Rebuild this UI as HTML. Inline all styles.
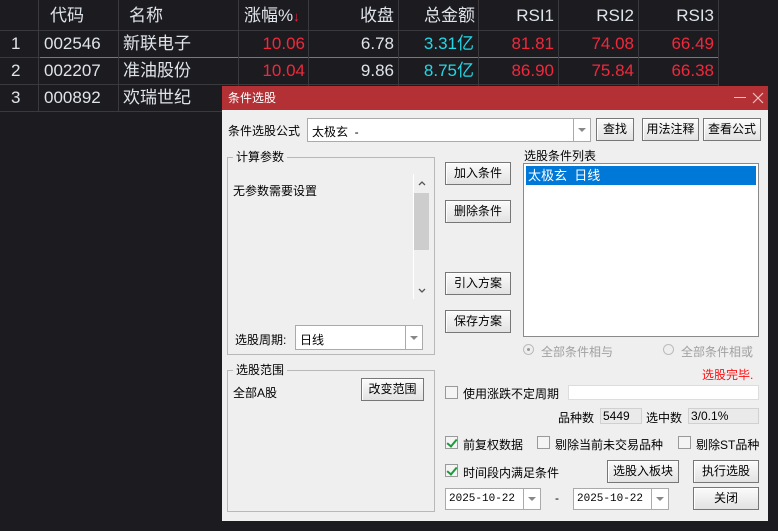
<!DOCTYPE html>
<html><head><meta charset="utf-8">
<style>
*{margin:0;padding:0;box-sizing:border-box}
body{width:778px;height:531px;background:#1c1c20;position:relative;overflow:hidden;font-family:"Liberation Sans","Noto Sans CJK SC",sans-serif}
.a{position:absolute}
.t{font-size:17px;color:#dfe3ea;white-space:nowrap;line-height:27px}
.vl{position:absolute;width:1px;background:#3a3a3e}
.hl{position:absolute;height:1px;background:#3a3a3e}
.r{color:#f0283c}.c{color:#22d8e8}
#dlg{position:absolute;left:222px;top:86px;width:546px;height:435px;background:#efefef;font-size:12px;color:#000}
#dlg .a{white-space:nowrap}
.title{left:0;top:0;width:546px;height:24px;background:#b33035;color:#fff;font-size:12px;line-height:24px;padding-left:6px}
.btn{position:absolute;border:1px solid #777;background:linear-gradient(#fbfbfb,#e2e2e2);text-align:center;font-size:12px;box-shadow:inset 1px 1px 0 #fff}
.box{position:absolute;border:1px solid #aaa;background:#fff}
.grp{position:absolute;border:1px solid #b8b8b8}
.leg{position:absolute;background:#efefef;padding:0 3px;top:-9px;left:5px;font-size:12px;line-height:16px}
.dd{position:absolute;top:0;right:0;bottom:0;width:17px;border-left:1px solid #aaa}
.dd:after{content:"";position:absolute;left:4px;top:50%;margin-top:-2px;border-left:4px solid transparent;border-right:4px solid transparent;border-top:4px solid #888}
.cb{position:absolute;width:13px;height:13px;border:1px solid #999;background:#f4f4f4}
.ck:after{content:"";position:absolute;left:3px;top:0px;width:4px;height:8px;border:solid #1a9a3a;border-width:0 2px 2px 0;transform:rotate(40deg)}
</style></head><body>
<div class="hl" style="left:0;top:30px;width:718px"></div>
<div class="hl" style="left:0;top:57px;width:718px"></div>
<div class="hl" style="left:40px;top:57px;width:678px;background:#6474c4"></div>
<div class="hl" style="left:0;top:84px;width:718px"></div>
<div class="hl" style="left:0;top:111px;width:222px"></div>
<div class="vl" style="left:38px;top:0;height:111px"></div>
<div class="vl" style="left:118px;top:0;height:111px"></div>
<div class="vl" style="left:238px;top:0;height:111px"></div>
<div class="vl" style="left:308px;top:0;height:86px"></div>
<div class="vl" style="left:398px;top:0;height:86px"></div>
<div class="vl" style="left:478px;top:0;height:86px"></div>
<div class="vl" style="left:558px;top:0;height:86px"></div>
<div class="vl" style="left:638px;top:0;height:86px"></div>
<div class="vl" style="left:718px;top:0;height:86px"></div>
<div class="a t" style="left:50px;top:2px">代码</div>
<div class="a t" style="left:129px;top:2px">名称</div>
<div class="a t" style="left:244px;top:2px">涨幅%<span style="color:#f0283c;font-size:13px">↓</span></div>
<div class="a t" style="left:308px;top:2px;width:86px;text-align:right">收盘</div>
<div class="a t" style="left:398px;top:2px;width:77px;text-align:right">总金额</div>
<div class="a t" style="left:478px;top:2px;width:76px;text-align:right">RSI1</div>
<div class="a t" style="left:558px;top:2px;width:76px;text-align:right">RSI2</div>
<div class="a t" style="left:638px;top:2px;width:76px;text-align:right">RSI3</div>
<div class="a t" style="left:11px;top:30px">1</div>
<div class="a t" style="left:44px;top:30px">002546</div>
<div class="a t" style="left:123px;top:30px">新联电子</div>
<div class="a t r" style="left:238px;top:30px;width:67px;text-align:right">10.06</div>
<div class="a t" style="left:308px;top:30px;width:86px;text-align:right">6.78</div>
<div class="a t c" style="left:398px;top:30px;width:76px;text-align:right">3.31亿</div>
<div class="a t r" style="left:478px;top:30px;width:76px;text-align:right">81.81</div>
<div class="a t r" style="left:558px;top:30px;width:76px;text-align:right">74.08</div>
<div class="a t r" style="left:638px;top:30px;width:76px;text-align:right">66.49</div>
<div class="a t" style="left:11px;top:57px">2</div>
<div class="a t" style="left:44px;top:57px">002207</div>
<div class="a t" style="left:123px;top:57px">准油股份</div>
<div class="a t r" style="left:238px;top:57px;width:67px;text-align:right">10.04</div>
<div class="a t" style="left:308px;top:57px;width:86px;text-align:right">9.86</div>
<div class="a t c" style="left:398px;top:57px;width:76px;text-align:right">8.75亿</div>
<div class="a t r" style="left:478px;top:57px;width:76px;text-align:right">86.90</div>
<div class="a t r" style="left:558px;top:57px;width:76px;text-align:right">75.84</div>
<div class="a t r" style="left:638px;top:57px;width:76px;text-align:right">66.38</div>
<div class="a t" style="left:11px;top:84px">3</div>
<div class="a t" style="left:44px;top:84px">000892</div>
<div class="a t" style="left:123px;top:84px">欢瑞世纪</div>

<div id="dlg">
<div class="a title">条件选股</div>
<div class="a" style="left:512px;top:11px;width:12px;height:1px;background:#f0c0c0"></div>
<svg class="a" style="left:530px;top:6px" width="12" height="12"><path d="M1 1L11 11M11 1L1 11" stroke="#f0c0c0" stroke-width="1.2"/></svg>

<div class="a" style="left:6px;top:36px">条件选股公式</div>
<div class="box" style="left:85px;top:32px;width:284px;height:24px"><span class="a" style="left:4px;top:4px">太极玄&nbsp;&nbsp;-</span><div class="dd"></div></div>
<div class="btn" style="left:374px;top:32px;width:38px;height:23px;line-height:21px">查找</div>
<div class="btn" style="left:420px;top:32px;width:57px;height:23px;line-height:21px">用法注释</div>
<div class="btn" style="left:481px;top:32px;width:58px;height:23px;line-height:21px">查看公式</div>

<div class="grp" style="left:5px;top:71px;width:208px;height:198px"><div class="leg">计算参数</div>
<div class="a" style="left:5px;top:24px">无参数需要设置</div>
<div class="a" style="left:185px;top:16px;width:17px;height:125px;border-left:1px solid #fff"></div>
<div class="a" style="left:186px;top:35px;width:15px;height:57px;background:#cdcdcd"></div>
<svg class="a" style="left:190px;top:22px" width="8" height="6"><path d="M1 5L4 2L7 5" stroke="#555" fill="none" stroke-width="1.3"/></svg>
<svg class="a" style="left:190px;top:130px" width="8" height="6"><path d="M1 1L4 4L7 1" stroke="#555" fill="none" stroke-width="1.3"/></svg>
<div class="a" style="left:7px;top:173px">选股周期:</div>
<div class="box" style="left:67px;top:167px;width:128px;height:25px"><span class="a" style="left:4px;top:5px">日线</span><div class="dd"></div></div>
</div>

<div class="btn" style="left:223px;top:76px;width:66px;height:23px;line-height:21px">加入条件</div>
<div class="btn" style="left:223px;top:114px;width:66px;height:23px;line-height:21px">删除条件</div>
<div class="btn" style="left:223px;top:186px;width:66px;height:23px;line-height:21px">引入方案</div>
<div class="btn" style="left:223px;top:224px;width:66px;height:23px;line-height:21px">保存方案</div>

<div class="a" style="left:302px;top:61px">选股条件列表</div>
<div class="box" style="left:301px;top:77px;width:236px;height:174px;border-color:#8a8a8a">
<div class="a" style="left:2px;top:2px;width:230px;height:19px;background:#0078d7;color:#fff;padding-left:2px;line-height:19px;font-size:13px">太极玄&nbsp;&nbsp;日线</div></div>
<div class="a" style="left:301px;top:258px;width:11px;height:11px;border-radius:50%;border:1px solid #bbb;background:#eee"><div class="a" style="left:3px;top:3px;width:3px;height:3px;background:#999;border-radius:50%"></div></div>
<div class="a" style="left:319px;top:257px;color:#a0a0a0">全部条件相与</div>
<div class="a" style="left:441px;top:258px;width:11px;height:11px;border-radius:50%;border:1px solid #bbb;background:#eee"></div>
<div class="a" style="left:459px;top:257px;color:#a0a0a0">全部条件相或</div>
<div class="a" style="left:480px;top:280px;color:#ff1010">选股完毕.</div>

<div class="grp" style="left:5px;top:284px;width:208px;height:142px"><div class="leg">选股范围</div>
<div class="a" style="left:5px;top:13px">全部A股</div>
<div class="btn" style="left:133px;top:7px;width:63px;height:23px;line-height:21px">改变范围</div>
</div>

<div class="cb" style="left:223px;top:300px"></div>
<div class="a" style="left:241px;top:299px">使用涨跌不定周期</div>
<div class="box" style="left:346px;top:299px;width:191px;height:15px;border-color:#ddd"></div>
<div class="a" style="left:336px;top:323px">品种数</div>
<div class="a" style="left:378px;top:322px;width:42px;height:16px;border:1px solid #d0d0d0;background:#eaeaea;padding-left:2px;line-height:14px">5449</div>
<div class="a" style="left:424px;top:323px">选中数</div>
<div class="a" style="left:466px;top:322px;width:71px;height:16px;border:1px solid #d0d0d0;background:#eaeaea;padding-left:2px;line-height:14px">3/0.1%</div>

<div class="cb ck" style="left:223px;top:350px"></div>
<div class="a" style="left:241px;top:350px">前复权数据</div>
<div class="cb" style="left:315px;top:350px"></div>
<div class="a" style="left:333px;top:350px">剔除当前未交易品种</div>
<div class="cb" style="left:456px;top:350px"></div>
<div class="a" style="left:474px;top:350px">剔除ST品种</div>

<div class="cb ck" style="left:223px;top:378px"></div>
<div class="a" style="left:241px;top:378px">时间段内满足条件</div>
<div class="btn" style="left:385px;top:374px;width:72px;height:23px;line-height:21px">选股入板块</div>
<div class="btn" style="left:471px;top:374px;width:66px;height:23px;line-height:21px">执行选股</div>
<div class="box" style="left:223px;top:402px;width:96px;height:22px"><span class="a" style="left:3px;top:4px;font-family:'Liberation Mono',monospace;font-size:11px">2025-10-22</span><div class="dd"></div></div>
<div class="a" style="left:333px;top:405px">-</div>
<div class="box" style="left:351px;top:402px;width:96px;height:22px"><span class="a" style="left:3px;top:4px;font-family:'Liberation Mono',monospace;font-size:11px">2025-10-22</span><div class="dd"></div></div>
<div class="btn" style="left:471px;top:401px;width:66px;height:23px;line-height:21px">关闭</div>
</div>
</body></html>
